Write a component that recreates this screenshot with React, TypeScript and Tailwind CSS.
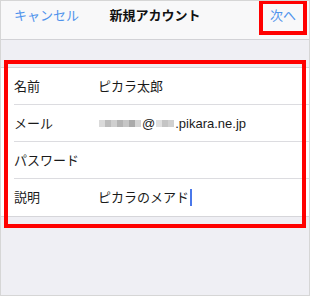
import React from "react";

const font = { fontFamily: '"Liberation Sans", "Noto Sans CJK JP", sans-serif' };

function Mosaic({ cells }: { cells: string[] }) {
  return (
    <span className="inline-flex items-center h-[8px] mx-[1px]">
      {cells.map((c, i) => (
        <span key={i} className={`h-[7px] w-[6px] ${c}`} />
      ))}
    </span>
  );
}

function Row({ label, children, last }: { label: string; children?: React.ReactNode; last?: boolean }) {
  return (
    <div className="pl-[13px] bg-white">
      <div className={`flex items-center h-[37px] ${last ? "" : "border-b border-[#dcdce0]"}`}>
        <div className="w-[84px] text-[13px] text-[#1a1a1a] leading-none">{label}</div>
        <div className="flex items-center text-[13px] text-[#1a1a1a] leading-none">{children}</div>
      </div>
    </div>
  );
}

export default function App() {
  return (
    <div className="relative w-[310px] h-[296px] border border-[#d6d6d6] bg-[#efeff4] overflow-hidden" style={font}>
      {/* nav */}
      <div className="h-[39px] bg-[#f8f8f9] border-b border-[#d2d2d6] flex items-start pt-[4px] px-[13px]">
        <div className="relative w-full flex justify-between leading-[22px] text-[13px]">
          <span className="text-[#4f93ec]">キャンセル</span>
          <span className="absolute left-1/2 -translate-x-1/2 font-bold text-[#111]">新規アカウント</span>
          <span className="text-[#4f93ec]">次へ</span>
        </div>
      </div>

      {/* list */}
      <div className="mt-[27px] border-t border-b border-[#d6d6da] bg-white">
        <Row label="名前">ピカラ太郎</Row>
        <Row label="メール">
          <Mosaic cells={["bg-[#dadada]", "bg-[#bcbcbc]", "bg-[#cfcfcf]", "bg-[#b4b4b4]", "bg-[#c6c6c6]", "bg-[#aaaaaa]", "bg-[#d4d4d4]"]} />
          <span>@</span>
          <Mosaic cells={["bg-[#e0e0e0]", "bg-[#c4c4c4]", "bg-[#d0d0d0]"]} />
          <span>.pikara.ne.jp</span>
        </Row>
        <Row label="パスワード" />
        <Row label="説明" last>
          ピカラのメアド
          <span className="ml-[1px] inline-block w-[2px] h-[17px] bg-[#4a78ea]" />
        </Row>
      </div>

      {/* red highlight boxes */}
      <div className="absolute left-[3px] top-[59px] w-[302px] h-[168px] border-4 border-[#ff0000]" />
      <div className="absolute left-[258px] top-[-1px] w-[48px] h-[35px] border-4 border-[#ff0000]" />
    </div>
  );
}
